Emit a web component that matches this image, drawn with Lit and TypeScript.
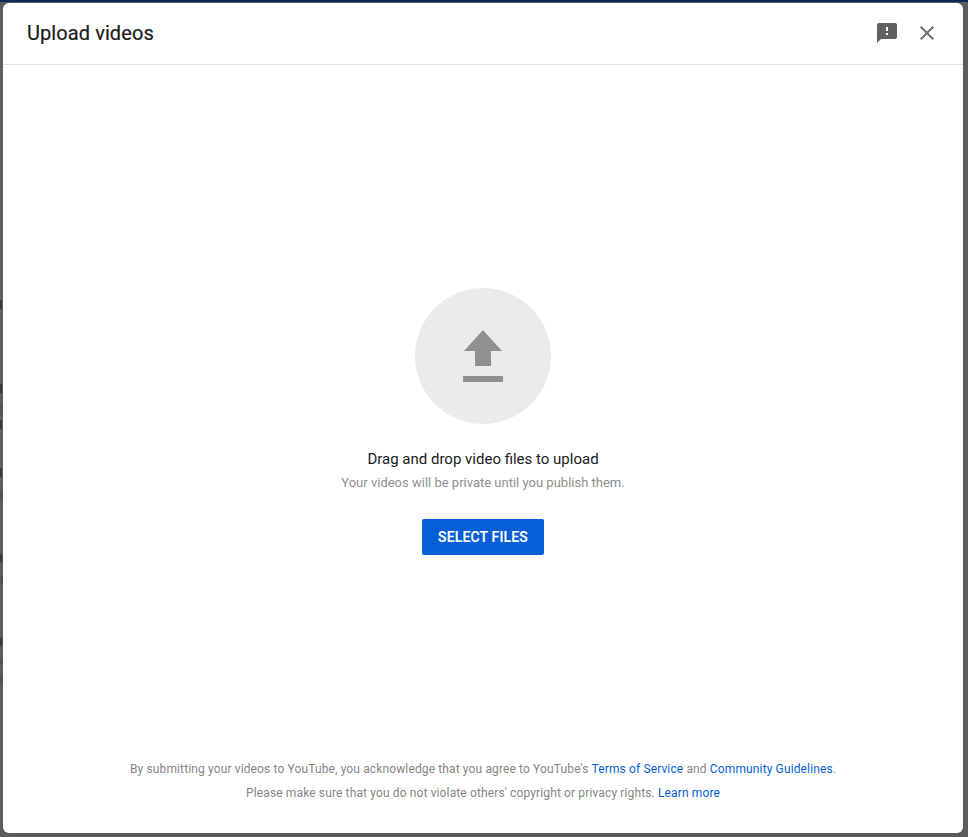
import { LitElement, html, css } from "lit";
import { customElement } from "lit/decorators.js";

const MARKS = [
  [298, 9], [382, 9], [418, 9], [466, 9], [552, 8], [636, 8],
];
const FAINT = [
  [403, 10], [488, 9], [574, 8], [656, 7], [672, 8],
];
const LINES = [182, 228, 278, 446, 530, 614];

@customElement("app-root")
export class AppRoot extends LitElement {
  static styles = css`
    :host {
      display: block;
      width: 968px;
      height: 837px;
      font-family: Roboto, "Noto Sans", sans-serif;
    }
    .backdrop {
      position: relative;
      box-sizing: border-box;
      height: 837px;
      background: #5c5c5c;
      border-top: 2px solid #0a2a55;
      padding: 1px 5px 4px 3px;
      display: flex;
    }
    .mark {
      position: absolute;
      left: 0;
      width: 2px;
      background: #3a3a3a;
    }
    .mark.faint {
      left: 1px;
      background: #4e4e4e;
    }
    .mark.line {
      width: 3px;
      background: #545454;
    }
    .dialog {
      flex: 1;
      display: flex;
      flex-direction: column;
      background: #fff;
      border-radius: 6px;
      overflow: hidden;
    }
    .header {
      box-sizing: border-box;
      height: 62px;
      flex: none;
      border-bottom: 1px solid #e0e0e0;
      display: flex;
      align-items: center;
      padding: 0 24px 2px;
      gap: 16px;
    }
    h1 {
      flex: 1;
      margin: 0;
      font-size: 20px;
      font-weight: 400;
      letter-spacing: 0.08px;
      color: #1a1a1a;
      -webkit-text-stroke: 0.2px #1a1a1a;
    }
    .icon {
      display: block;
      width: 24px;
      height: 24px;
      fill: #606060;
    }
    .icon.close {
      fill: #717171;
    }
    .main {
      flex: 1;
      display: flex;
      flex-direction: column;
      align-items: center;
      padding-top: 223px;
    }
    .circle {
      width: 136px;
      height: 136px;
      border-radius: 50%;
      background: #ebebeb;
      display: flex;
      align-items: center;
      justify-content: center;
    }
    .circle svg {
      display: block;
      width: 136px;
      height: 136px;
      fill: #909090;
    }
    .title {
      margin-top: 25px;
      font-size: 15px;
      line-height: 20px;
      color: #1a1a1a;
    }
    .sub {
      margin-top: 5px;
      font-size: 13px;
      line-height: 18px;
      color: #8f8f8f;
    }
    button {
      margin-top: 27px;
      box-sizing: border-box;
      width: 122px;
      height: 36px;
      border: 0;
      border-radius: 2px;
      background: #065fd4;
      color: #fff;
      font-family: inherit;
      font-size: 14px;
      font-weight: 500;
      letter-spacing: 0.15px;
      -webkit-text-stroke: 0.15px #fff;
      padding: 0;
    }
    .footer {
      flex: none;
      padding-bottom: 28px;
      text-align: center;
      font-size: 12px;
      line-height: 24px;
      letter-spacing: 0.13px;
      color: #858585;
    }
    a {
      color: #065fd4;
      text-decoration: none;
    }
  `;

  render() {
    return html`
      <div class="backdrop">
        ${LINES.map((y) => html`<i class="mark line" style="top:${y}px;height:1px"></i>`)}
        ${MARKS.map(([y, h]) => html`<i class="mark" style="top:${y}px;height:${h}px"></i>`)}
        ${FAINT.map(([y, h]) => html`<i class="mark faint" style="top:${y}px;height:${h}px"></i>`)}
        <div class="dialog">
          <div class="header">
            <h1>Upload videos</h1>
            <svg class="icon" viewBox="0 0 24 24">
              <path d="M20 2H4c-1.1 0-1.99.9-1.99 2L2 22l4-4h14c1.1 0 2-.9 2-2V4c0-1.1-.9-2-2-2zm-7 12h-2v-2h2v2zm0-4h-2V6h2v4z"></path>
            </svg>
            <svg class="icon close" viewBox="0 0 24 24">
              <path d="M19 6.41 17.59 5 12 10.59 6.41 5 5 6.41 10.59 12 5 17.59 6.41 19 12 13.41 17.59 19 19 17.59 13.41 12z"></path>
            </svg>
          </div>
          <div class="main">
            <div class="circle">
              <svg viewBox="0 0 136 136">
                <path d="M68 42 L87 63 H76 V78 H60 V63 H49 Z"></path>
                <rect x="48" y="88" width="40" height="6"></rect>
              </svg>
            </div>
            <div class="title">Drag and drop video files to upload</div>
            <div class="sub">Your videos will be private until you publish them.</div>
            <button>SELECT FILES</button>
          </div>
          <div class="footer">
            <div>By submitting your videos to YouTube, you acknowledge that you agree to YouTube's <a>Terms of Service</a> and <a>Community Guidelines</a>.</div>
            <div>Please make sure that you do not violate others' copyright or privacy rights. <a>Learn more</a></div>
          </div>
        </div>
      </div>
    `;
  }
}
